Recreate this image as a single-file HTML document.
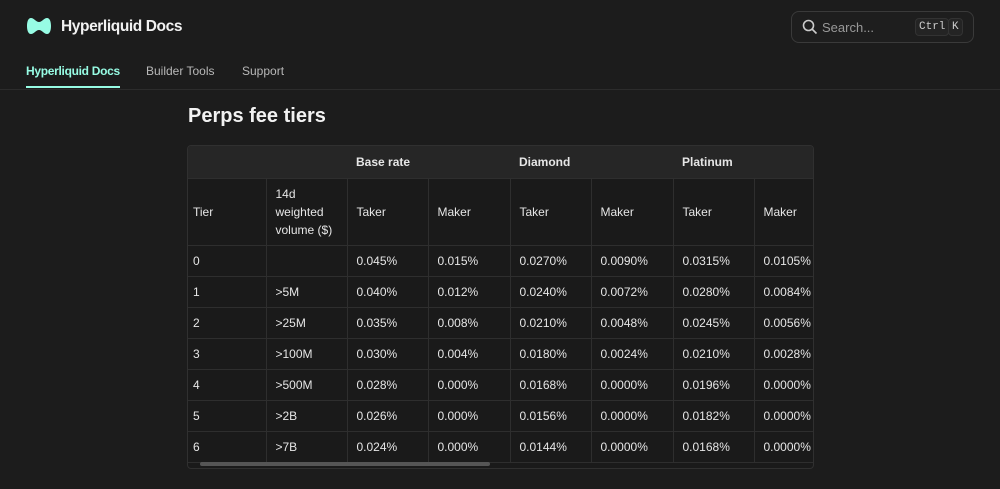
<!DOCTYPE html>
<html><head><style>
body{margin:0;width:1000px;height:489px;background:#1c1c1c;font-family:"Liberation Sans",sans-serif;color:#e8e8e8;overflow:hidden;position:relative}
.hdr{position:absolute;left:0;top:0;width:1000px;height:89px;border-bottom:1px solid #2c2c2c}
.logo{position:absolute;left:27px;top:17px}
.title{position:absolute;left:61px;top:18px;font-size:15.5px;letter-spacing:-0.4px;font-weight:bold;color:#f2f2f2}
.nav{position:absolute;top:64px;font-size:12px;color:#b8b8b8}
.nav.a{color:#97fce4;font-weight:bold;left:26px;letter-spacing:-0.3px}
.ul{position:absolute;left:26px;top:86px;width:94px;height:2px;background:#97fce4}
.search{position:absolute;left:791px;top:11px;width:181px;height:30px;border:1px solid #3a3a3a;border-radius:8px;background:#1e1e1e}
.search span.t{position:absolute;left:30px;top:8px;font-size:13px;color:#999}
.kbd{position:absolute;top:6px;height:16px;border:1px solid #333;border-radius:4px;background:#242424;font-family:"Liberation Mono",monospace;font-size:11px;color:#ccc;line-height:16px;padding:0 3px}
h1{position:absolute;left:188px;top:105px;margin:0;font-size:20px;font-weight:bold;color:#f2f2f2}
.tbl{position:absolute;left:187px;top:145px;width:625px;height:322px;border:1px solid #303030;border-radius:4px;overflow:hidden;background:#1a1a1a}
table{border-collapse:collapse;font-size:12px;table-layout:fixed;width:647px}
td{border-right:1px solid #2e2e2e;border-bottom:1px solid #2e2e2e;padding:0 4px 0 9px;height:30px;color:#e6e6e6;white-space:nowrap;overflow:hidden}
td:first-child{padding-left:5px}
tr.h1 td{background:#262626;height:32px;font-weight:bold;border-right:none}
tr.h2 td{height:66px;line-height:18px}
.sb{position:absolute;left:12px;top:316px;width:290px;height:4px;border-radius:2px;background:#555}
</style></head><body>
<div class="hdr">
<svg class="logo" width="24" height="18" viewBox="0 0 24 18"><path d="M4 1C7 1 9 5 12 5S17 1 20 1S24 5 24 9S23 17 20 17S15 13 12 13S7 17 4 17S0 13 0 9S1 1 4 1Z" fill="#97fce4"/></svg>
<div class="title">Hyperliquid Docs</div>
<div class="nav a">Hyperliquid Docs</div>
<div class="nav" style="left:146px">Builder Tools</div>
<div class="nav" style="left:242px">Support</div>
<div class="ul"></div>
</div>
<div class="search">
<svg style="position:absolute;left:10px;top:7px" width="16" height="16" viewBox="0 0 16 16"><circle cx="6.5" cy="6.5" r="5" stroke="#ccc" stroke-width="1.6" fill="none"/><path d="M10 10L14.5 14.5" stroke="#ccc" stroke-width="1.6"/></svg>
<span class="t">Search...</span>
<span class="kbd" style="left:123px">Ctrl</span><span class="kbd" style="left:156px">K</span>
</div>
<h1>Perps fee tiers</h1>
<div class="tbl">
<table>
<colgroup><col style="width:78px"><col style="width:81px"><col style="width:81px"><col style="width:82px"><col style="width:81px"><col style="width:82px"><col style="width:81px"><col style="width:81px"></colgroup>
<tr class="h1"><td></td><td></td><td>Base rate</td><td></td><td>Diamond</td><td></td><td>Platinum</td><td></td></tr>
<tr class="h2"><td>Tier</td><td>14d<br>weighted<br>volume ($)</td><td>Taker</td><td>Maker</td><td>Taker</td><td>Maker</td><td>Taker</td><td>Maker</td></tr>
<tr><td>0</td><td></td><td>0.045%</td><td>0.015%</td><td>0.0270%</td><td>0.0090%</td><td>0.0315%</td><td>0.0105%</td></tr>
<tr><td>1</td><td>&gt;5M</td><td>0.040%</td><td>0.012%</td><td>0.0240%</td><td>0.0072%</td><td>0.0280%</td><td>0.0084%</td></tr>
<tr><td>2</td><td>&gt;25M</td><td>0.035%</td><td>0.008%</td><td>0.0210%</td><td>0.0048%</td><td>0.0245%</td><td>0.0056%</td></tr>
<tr><td>3</td><td>&gt;100M</td><td>0.030%</td><td>0.004%</td><td>0.0180%</td><td>0.0024%</td><td>0.0210%</td><td>0.0028%</td></tr>
<tr><td>4</td><td>&gt;500M</td><td>0.028%</td><td>0.000%</td><td>0.0168%</td><td>0.0000%</td><td>0.0196%</td><td>0.0000%</td></tr>
<tr><td>5</td><td>&gt;2B</td><td>0.026%</td><td>0.000%</td><td>0.0156%</td><td>0.0000%</td><td>0.0182%</td><td>0.0000%</td></tr>
<tr><td>6</td><td>&gt;7B</td><td>0.024%</td><td>0.000%</td><td>0.0144%</td><td>0.0000%</td><td>0.0168%</td><td>0.0000%</td></tr>
</table>
<div class="sb"></div>
</div>
</body></html>
